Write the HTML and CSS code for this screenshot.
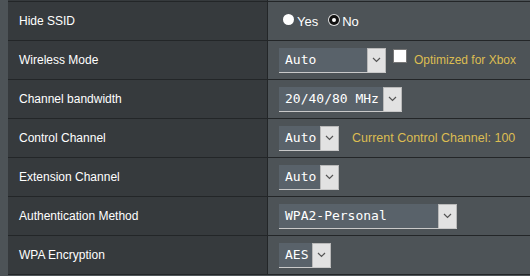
FILE: index.html
```html
<!DOCTYPE html>
<html lang="en">
<head>
  <meta charset="UTF-8" />
  <title>Wireless - General</title>
  <link rel="stylesheet" href="styles.css">
</head>
<body>
  <div class="panel">
    <div class="row edge"><div class="label"></div><div class="value"></div></div>

    <div class="row">
      <div class="label">Hide SSID</div>
      <div class="value">
        <label class="radio"><span class="dot"></span>Yes</label>
        <label class="radio"><span class="dot on"></span>No</label>
      </div>
    </div>

    <div class="row">
      <div class="label">Wireless Mode</div>
      <div class="value">
        <div class="select w-mode"><span class="text">Auto</span><span class="arrow"><svg width="9" height="6" viewBox="0 0 9 6"><path d="M1 1l3.5 3.5L8 1" fill="none" stroke="#555" stroke-width="1.2"/></svg></span></div>
        <span class="check"></span>
        <span class="hint">Optimized for Xbox</span>
      </div>
    </div>

    <div class="row">
      <div class="label">Channel bandwidth</div>
      <div class="value">
        <div class="select w-bw"><span class="text">20/40/80 MHz</span><span class="arrow"><svg width="9" height="6" viewBox="0 0 9 6"><path d="M1 1l3.5 3.5L8 1" fill="none" stroke="#555" stroke-width="1.2"/></svg></span></div>
      </div>
    </div>

    <div class="row">
      <div class="label">Control Channel</div>
      <div class="value">
        <div class="select w-auto"><span class="text">Auto</span><span class="arrow"><svg width="9" height="6" viewBox="0 0 9 6"><path d="M1 1l3.5 3.5L8 1" fill="none" stroke="#555" stroke-width="1.2"/></svg></span></div>
        <span class="hint wide">Current Control Channel: 100</span>
      </div>
    </div>

    <div class="row">
      <div class="label">Extension Channel</div>
      <div class="value">
        <div class="select w-auto"><span class="text">Auto</span><span class="arrow"><svg width="9" height="6" viewBox="0 0 9 6"><path d="M1 1l3.5 3.5L8 1" fill="none" stroke="#555" stroke-width="1.2"/></svg></span></div>
      </div>
    </div>

    <div class="row">
      <div class="label">Authentication Method</div>
      <div class="value">
        <div class="select w-auth"><span class="text">WPA2-Personal</span><span class="arrow"><svg width="9" height="6" viewBox="0 0 9 6"><path d="M1 1l3.5 3.5L8 1" fill="none" stroke="#555" stroke-width="1.2"/></svg></span></div>
      </div>
    </div>

    <div class="row">
      <div class="label">WPA Encryption</div>
      <div class="value">
        <div class="select w-aes"><span class="text">AES</span><span class="arrow"><svg width="9" height="6" viewBox="0 0 9 6"><path d="M1 1l3.5 3.5L8 1" fill="none" stroke="#555" stroke-width="1.2"/></svg></span></div>
      </div>
    </div>
  </div>
</body>
</html>
```

FILE: styles.css
```css
* { box-sizing: border-box; }
body {
  margin: 0;
  padding-left: 8px;
  background: #4d5357;
  font-family: "Liberation Sans", Arial, sans-serif;
  font-size: 12px;
  color: #fff;
  overflow: hidden;
}
.row {
  display: flex;
  height: 39px;
  border-bottom: 1px solid #232628;
}
.row.edge { height: 2px; }
.label {
  width: 260px;
  padding-left: 11px;
  background: #363a3d;
  border-right: 1px solid #232628;
  display: flex;
  align-items: center;
}
.value {
  flex: 1;
  display: flex;
  align-items: center;
  padding-left: 11px;
}

/* radios */
.radio {
  display: flex;
  align-items: center;
  margin-left: 4px;
  margin-right: 7px;
  font-size: 13px;
}
.dot {
  width: 11px;
  height: 11px;
  border-radius: 50%;
  background: #fff;
  margin-right: 3px;
  margin-top: -3px;
}
.dot.on {
  border: 3px solid #111;
  box-shadow: 0 0 0 1px #ddd;
  width: 10px;
  height: 10px;
}

/* fake select boxes */
.select {
  display: flex;
  height: 25px;
  background: #59626a;
  border-bottom: 1px solid #c9c9c9;
}
.select .text {
  flex: 1;
  padding-left: 6px;
  font-family: "DejaVu Sans Mono", monospace;
  font-size: 13px;
  line-height: 24px;
  white-space: nowrap;
}
.select .arrow {
  width: 19px;
  background: #e2e2e2;
  border: 1px solid #b9b9b9;
  border-bottom: none;
  display: flex;
  align-items: center;
  justify-content: center;
}
.w-mode { width: 107px; }
.w-bw { width: 123px; }
.w-auto { width: 60px; }
.w-auth { width: 178px; }
.w-aes { width: 52px; }

.check {
  width: 14px;
  height: 14px;
  background: #fff;
  border: 1px solid #777;
  margin: -8px 7px 0 7px;
}
.hint {
  color: #dcbd52;
  font-size: 12px;
}
.hint.wide { margin-left: 13px; font-size: 12.5px; }
```
